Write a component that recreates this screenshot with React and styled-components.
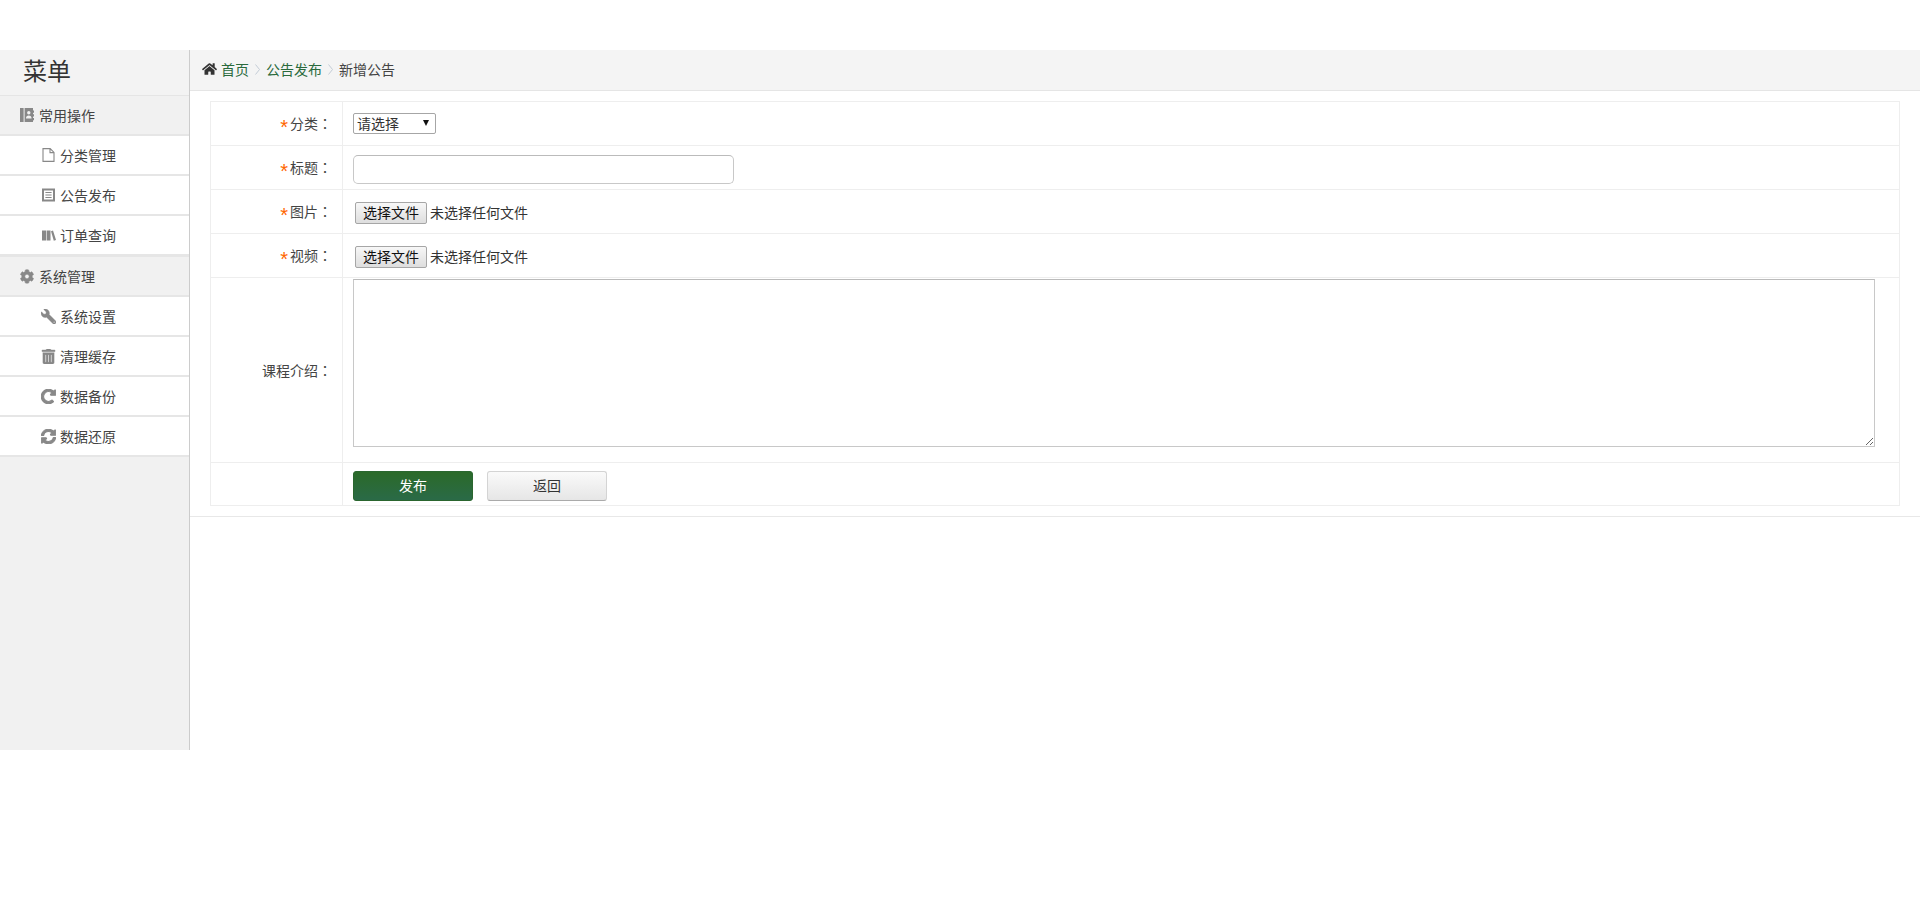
import React from 'react';
import styled, { createGlobalStyle } from 'styled-components';
import {
  FaHome,
  FaCog,
  FaWrench,
  FaTrashAlt,
  FaRedoAlt,
  FaSyncAlt,
} from 'react-icons/fa';

// the reference uses heavier glyphs than fa5, so thicken them a bit
const bold = (Icon, width) => styled(Icon)`
  stroke: currentColor;
  stroke-width: ${width};
`;

const BoldCog = bold(FaCog, 20);
const BoldRedo = bold(FaRedoAlt, 36);
const BoldSync = bold(FaSyncAlt, 36);
const BoldTrash = bold(FaTrashAlt, 12);

const FlippedWrench = styled(FaWrench)`
  transform: scaleX(-1);
  stroke: currentColor;
  stroke-width: 14;
`;

const ContactIcon = () => (
  <svg width="14" height="14" viewBox="0 0 14 14" fill="currentColor">
    <path d="M0 0h3.6v14H0z" />
    <path
      fillRule="evenodd"
      d="M4.6 0H13v2.5h1v2.2h-1v1.6h1v2.2h-1v1.6h1v2.2h-1V14H4.6zM8.8 3a1.7 1.7 0 1 0 0 3.4 1.7 1.7 0 0 0 0-3.4zM6 10.4h5.6c0-1.8-1-3-2.8-3s-2.8 1.2-2.8 3z"
    />
  </svg>
);

const FileIcon = () => (
  <svg width="13" height="14" viewBox="0 0 13 14" fill="none" stroke="currentColor" strokeWidth="1.1">
    <path d="M1 .6h7.2L12 4.4v9H1zM8 .6v4h4" />
  </svg>
);

const ListIcon = () => (
  <svg width="13" height="14" viewBox="0 0 13 14" fill="none" stroke="currentColor">
    <rect x="1" y="1.5" width="11" height="11" strokeWidth="2" />
    <path d="M3.4 4.5h6.2M3.4 7h6.2M3.4 9.5h6.2" strokeWidth="1.1" />
  </svg>
);

const BooksIcon = () => (
  <svg width="14" height="11" viewBox="0 0 14 11" fill="currentColor">
    <path d="M0 .5h4v10H0zM4.6 .5h3.9v10H4.6zM9 1.2 11 .4l3 9.5-2.2.8z" />
  </svg>
);

const ChevronIcon = () => (
  <Chevron width="5" height="11" viewBox="0 0 5 11" fill="none" stroke="#c4ccd6">
    <path d="M.5.5l4 5-4 5" />
  </Chevron>
);

const menus = [
  {
    title: '常用操作',
    icon: <ContactIcon />,
    items: [
      { label: '分类管理', icon: <FileIcon /> },
      { label: '公告发布', icon: <ListIcon /> },
      { label: '订单查询', icon: <BooksIcon /> },
    ],
  },
  {
    title: '系统管理',
    icon: <BoldCog />,
    items: [
      { label: '系统设置', icon: <FlippedWrench /> },
      { label: '清理缓存', icon: <BoldTrash /> },
      { label: '数据备份', icon: <BoldRedo /> },
      { label: '数据还原', icon: <BoldSync /> },
    ],
  },
];

const App = () => (
  <>
    <GlobalStyle />
    <Layout>
      <Sidebar>
        <SidebarTitle>菜单</SidebarTitle>
        {menus.map((menu) => (
          <MenuGroup key={menu.title}>
            <SectionHead>
              <SectionIcon>{menu.icon}</SectionIcon>
              {menu.title}
            </SectionHead>
            {menu.items.map((item) => (
              <MenuItem key={item.label}>
                <ItemIcon>{item.icon}</ItemIcon>
                {item.label}
              </MenuItem>
            ))}
          </MenuGroup>
        ))}
      </Sidebar>
      <Main>
        <Breadcrumb>
          <HomeIcon />
          <Crumb href="#">首页</Crumb>
          <ChevronIcon />
          <Crumb href="#">公告发布</Crumb>
          <ChevronIcon />
          <span>新增公告</span>
        </Breadcrumb>
        <FormBox>
          <FormTable>
            <tbody>
              <tr>
                <LabelCell><Star>*</Star>分类<Colon>：</Colon></LabelCell>
                <FieldCell>
                  <SelectWrap>
                    <Select defaultValue="">
                      <option value="">请选择</option>
                    </Select>
                  </SelectWrap>
                </FieldCell>
              </tr>
              <tr>
                <LabelCell><Star>*</Star>标题<Colon>：</Colon></LabelCell>
                <FieldCell><TextInput type="text" /></FieldCell>
              </tr>
              <tr>
                <LabelCell><Star>*</Star>图片<Colon>：</Colon></LabelCell>
                <FieldCell>
                  <FileButton type="button">选择文件</FileButton>
                  <FileName>未选择任何文件</FileName>
                </FieldCell>
              </tr>
              <tr>
                <LabelCell><Star>*</Star>视频<Colon>：</Colon></LabelCell>
                <FieldCell>
                  <FileButton type="button">选择文件</FileButton>
                  <FileName>未选择任何文件</FileName>
                </FieldCell>
              </tr>
              <tr>
                <AreaLabelCell>课程介绍<Colon>：</Colon></AreaLabelCell>
                <AreaCell><TextArea /></AreaCell>
              </tr>
              <tr>
                <EmptyCell />
                <ButtonCell>
                  <ActionButton type="button" $primary>发布</ActionButton>
                  <ActionButton type="button">返回</ActionButton>
                </ButtonCell>
              </tr>
            </tbody>
          </FormTable>
        </FormBox>
      </Main>
    </Layout>
  </>
);

export default App;

const font = `"Liberation Sans", "Noto Sans CJK SC", sans-serif`;

const GlobalStyle = createGlobalStyle`
  html, body {
    margin: 0;
    padding: 0;
    background: #fff;
    color: #333;
    font: 14px ${font};
  }
  * {
    box-sizing: border-box;
  }
`;

const Layout = styled.div`
  display: flex;
  align-items: flex-start;
  margin-top: 50px;
`;

const Sidebar = styled.aside`
  flex: 0 0 190px;
  height: 700px;
  background: #f1f1f1;
  border-right: 1px solid #ccc;
`;

const SidebarTitle = styled.div`
  height: 46px;
  padding-left: 23px;
  font-size: 24px;
  line-height: 44px;
  color: #333;
  background: #f3f3f3;
  border-bottom: 1px solid #e5e5e5;
`;

const MenuGroup = styled.div`
  & + & {
    border-top: 1px solid #e6e6e6;
  }
`;

const SectionHead = styled.div`
  display: flex;
  align-items: center;
  height: 40px;
  padding-left: 20px;
  font-size: 14px;
  color: #444;
  background: #f1f1f1;
  border-bottom: 2px solid #e6e6e6;
`;

const SectionIcon = styled.span`
  display: inline-flex;
  justify-content: center;
  width: 14px;
  margin-right: 5px;
  font-size: 15px;
  color: #888;
`;

const MenuItem = styled.div`
  display: flex;
  align-items: center;
  height: 40px;
  padding-left: 41px;
  font-size: 14px;
  color: #444;
  background: #fff;
  border-bottom: 2px solid #e6e6e6;
`;

const ItemIcon = styled.span`
  display: inline-flex;
  justify-content: center;
  width: 15px;
  margin-right: 4px;
  font-size: 15px;
  color: #888;
`;

const Main = styled.main`
  flex: 1;
  min-width: 0;
`;

const Breadcrumb = styled.nav`
  display: flex;
  align-items: center;
  height: 41px;
  padding: 0 0 2px 12px;
  font-size: 14px;
  color: #444;
  background: #f4f4f4;
  border-bottom: 1px solid #e5e5e5;
`;

const HomeIcon = styled(FaHome)`
  width: 15px;
  height: 14px;
  margin-right: 4px;
  color: #333;
`;

const Crumb = styled.a`
  color: #2a6a3c;
  text-decoration: none;
`;

const Chevron = styled.svg`
  margin: 0 6px;
`;

const FormBox = styled.div`
  padding: 10px 20px;
  border-bottom: 1px solid #e8e8e8;
`;

const FormTable = styled.table`
  width: 100%;
  border-collapse: collapse;
  table-layout: fixed;
  border: 1px solid #eee;

  td {
    border: 1px solid #eee;
  }
`;

const LabelCell = styled.td`
  width: 132px;
  height: 44px;
  padding: 0 10px 2px 0;
  text-align: right;
  font-size: 14px;
  color: #444;
`;

const AreaLabelCell = styled(LabelCell)`
  padding-bottom: 0;
`;

const EmptyCell = styled(LabelCell)`
  height: 43px;
`;

const Star = styled.span`
  margin-right: 2px;
  font-size: 20px;
  line-height: 0;
  vertical-align: -5px;
  color: #f60;
`;

const Colon = styled.span`
  font-family: "Noto Sans CJK TC", sans-serif;
`;

const FieldCell = styled.td`
  padding: 0 10px;
  color: #333;
`;

const AreaCell = styled(FieldCell)`
  height: 185px;
  padding: 1px 24px 15px 10px;
  vertical-align: top;
`;

const ButtonCell = styled(FieldCell)`
  height: 43px;
  padding-top: 3px;
`;

const SelectWrap = styled.span`
  position: relative;
  display: inline-block;
  vertical-align: middle;

  &::after {
    content: '';
    position: absolute;
    top: 7px;
    right: 7px;
    border: 3.5px solid transparent;
    border-top: 6px solid #111;
    border-bottom: 0;
    pointer-events: none;
  }
`;

const Select = styled.select`
  display: block;
  width: 83px;
  height: 21px;
  padding: 0 0 0 3px;
  appearance: none;
  background: #fff;
  border: 1px solid #a6a6a6;
  border-radius: 2px;
  font: 14px ${font};
  color: #333;
`;

const TextInput = styled.input`
  display: block;
  width: 381px;
  height: 29px;
  margin-top: 4px;
  padding: 0 8px;
  background: #fff;
  border: 1px solid #c8c8c8;
  border-top-color: #bbb;
  border-radius: 5px;
  font: 14px ${font};
`;

const FileButton = styled.button`
  width: 72px;
  height: 22px;
  margin: 2px 0 0 2px;
  padding: 0;
  background: linear-gradient(#f7f7f7, #dedede);
  border: 1px solid #a6a6a6;
  border-radius: 2px;
  font: 14px/20px ${font};
  color: #111;
  vertical-align: middle;
`;

const FileName = styled.span`
  margin-left: 3px;
  font-size: 14px;
  color: #333;
  vertical-align: middle;
`;

const TextArea = styled.textarea`
  display: block;
  width: 100%;
  height: 168px;
  background: #fff;
  border: 1px solid #c8c8c8;
  border-top-color: #bbb;
  resize: both;
`;

const ActionButton = styled.button`
  width: 120px;
  height: 30px;
  margin-right: 14px;
  padding: 0;
  vertical-align: middle;
  border-radius: 3px;
  font: 14px/28px ${font};
  color: ${(props) => (props.$primary ? '#fff' : '#333')};
  background: ${(props) => (props.$primary
    ? 'linear-gradient(#2b6a29, #2a6a47)'
    : 'linear-gradient(#fafafa, #e6e6e6)')};
  border: 1px solid ${(props) => (props.$primary ? '#2a662f' : '#d4d4d4')};
  border-bottom-color: ${(props) => (props.$primary ? '#2a662f' : '#aaa')};
`;
